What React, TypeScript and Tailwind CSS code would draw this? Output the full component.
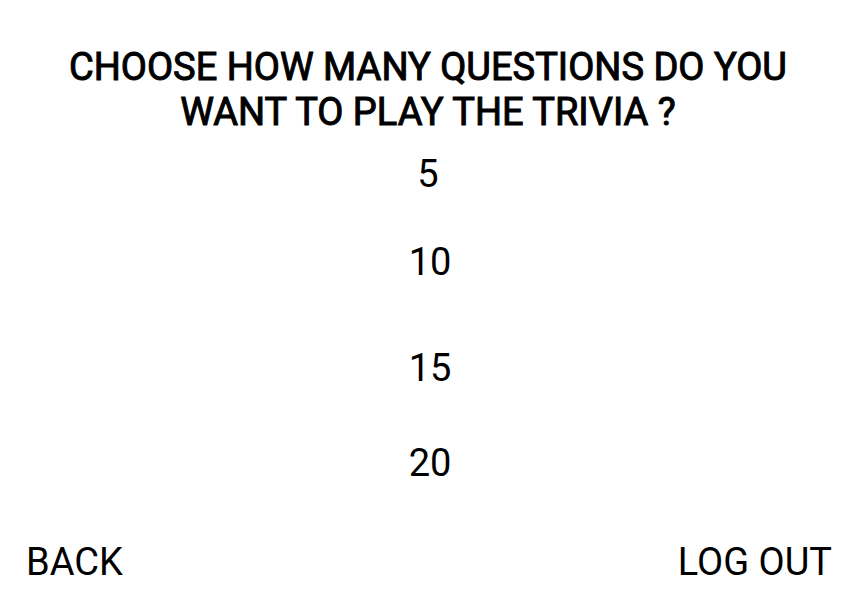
const counts = [
  { value: 5, spacing: "pb-[43px]" },
  { value: 10, spacing: "pl-1 pb-[61px]" },
  { value: 15, spacing: "pl-1 pb-[50px]" },
  { value: 20, spacing: "pl-1 pb-[54px]" },
];

export default function App() {
  return (
    <main className="flex min-h-screen flex-col bg-white px-6 pt-[45px] text-[38px] leading-[45px] text-black font-[Roboto,sans-serif]">
      <h1 className="mx-auto max-w-[760px] text-center font-normal [-webkit-text-stroke:1px_black]">
        CHOOSE HOW MANY QUESTIONS DO YOU WANT TO PLAY THE TRIVIA ?
      </h1>
      <div className="mt-[17px] flex flex-col items-center">
        {counts.map(({ value, spacing }) => (
          <div key={value} className={spacing}>
            <button type="button" className="block">{value}</button>
          </div>
        ))}
      </div>
      <nav className="flex justify-between pl-0.5">
        <button type="button">BACK</button>
        <button type="button">LOG OUT</button>
      </nav>
    </main>
  );
}
